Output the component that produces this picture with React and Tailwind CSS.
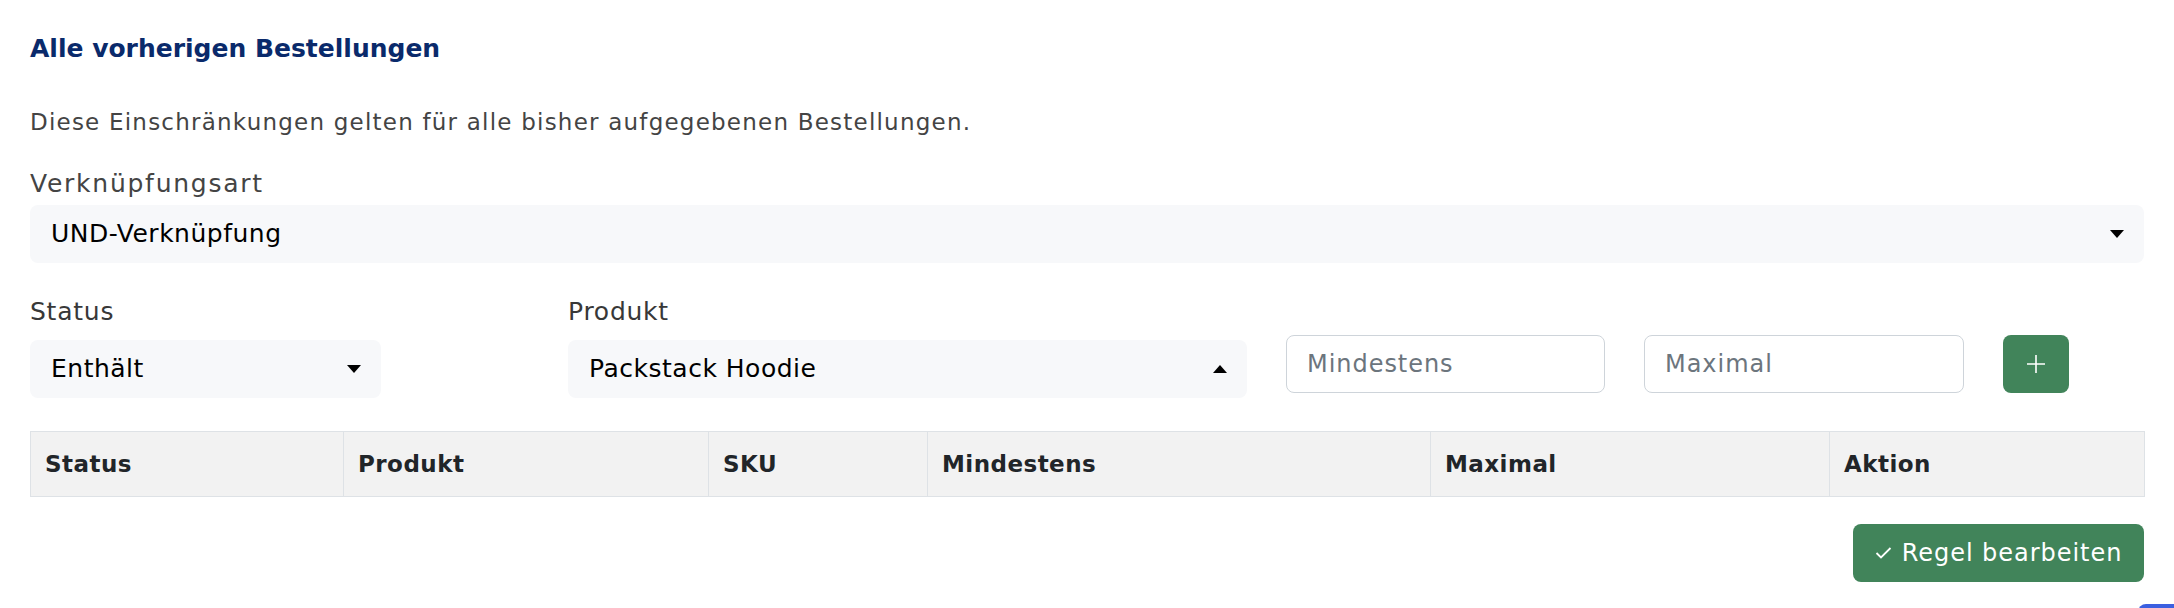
const columns = [
  { label: "Status", width: "w-[313px]" },
  { label: "Produkt", width: "w-[365px]" },
  { label: "SKU", width: "w-[219px]" },
  { label: "Mindestens", width: "w-[503px]" },
  { label: "Maximal", width: "w-[399px]" },
  { label: "Aktion", width: "w-[315px]" },
];

function Caret({ up }) {
  return (
    <svg width="14" height="8" viewBox="0 0 14 8" className="shrink-0">
      {up ? <polygon points="0,8 14,8 7,0" fill="#000" /> : <polygon points="0,0 14,0 7,8" fill="#000" />}
    </svg>
  );
}

function Select({ value, up, className }) {
  return (
    <div className={"flex h-[58px] items-center justify-between rounded-[8px] bg-[#f7f8fa] pl-[21px] pr-[20px] " + className}>
      <span className="text-[25px] tracking-[0.02em] text-black">{value}</span>
      <Caret up={up} />
    </div>
  );
}

export default function App() {
  return (
    <div className="min-h-[608px] w-full bg-white px-[30px] pt-[29px] font-['DejaVu_Sans',sans-serif] text-[#444]">
      <h2 className="text-[25px] leading-[40px] font-bold tracking-[0em] text-[#0a2a6b]">Alle vorherigen Bestellungen</h2>
      <p className="mt-[37px] text-[23px] leading-[33px] tracking-[0.053em]">
        Diese Einschränkungen gelten für alle bisher aufgegebenen Bestellungen.
      </p>

      <div className="mt-[28px] text-[25px] leading-[33px] tracking-[0.07em]">Verknüpfungsart</div>
      <Select value="UND-Verknüpfung" className="mt-[5px] w-full" />

      <div className="mt-[32px] flex items-end gap-[39px]">
        <div className="w-[499px]">
          <div className="mb-[12px] text-[25px] leading-[33px] tracking-[0.03em] text-[#383838]">Status</div>
          <Select value="Enthält" className="w-[351px]" />
        </div>
        <div className="w-[679px]">
          <div className="mb-[12px] text-[25px] leading-[33px] tracking-[0.03em] text-[#383838]">Produkt</div>
          <Select value="Packstack Hoodie" up className="w-full" />
        </div>
        <input
          placeholder="Mindestens"
          className="mb-[5px] h-[58px] w-[319px] rounded-[8px] border-[1.5px] border-[#ced4da] bg-white px-[20px] text-[24px] tracking-[0.04em] placeholder:text-[#6c757d] outline-none"
        />
        <input
          placeholder="Maximal"
          className="mb-[5px] h-[58px] w-[320px] rounded-[8px] border-[1.5px] border-[#ced4da] bg-white px-[20px] text-[24px] tracking-[0.04em] placeholder:text-[#6c757d] outline-none"
        />
        <button className="mb-[5px] flex h-[58px] w-[66px] items-center justify-center rounded-[8px] bg-[#41845a]">
          <svg width="20" height="20" viewBox="0 0 20 20">
            <path d="M10 1v18M1 10h18" stroke="#fff" strokeWidth="1.6" />
          </svg>
        </button>
      </div>

      <table className="mt-[33px] w-full table-fixed border-collapse">
        <thead>
          <tr className="bg-[#f2f2f2]">
            {columns.map((col) => (
              <th
                key={col.label}
                className={"h-[65px] border border-[#dee2e6] pl-[14px] text-left text-[23px] font-bold tracking-[0.02em] text-[#212529] " + col.width}
              >
                {col.label}
              </th>
            ))}
          </tr>
        </thead>
      </table>

      <div className="mt-[27px] flex justify-end">
        <button className="flex h-[58px] w-[291px] items-center justify-center gap-[10px] rounded-[8px] bg-[#41845a] text-[24px] tracking-[0.04em] text-white">
          <svg width="17" height="12" viewBox="0 0 17 12">
            <path d="M1.5 6l4.5 4.5L15.5 1" fill="none" stroke="#fff" strokeWidth="1.8" />
          </svg>
          Regel bearbeiten
        </button>
      </div>

      <div className="mt-[22px] -mr-[30px] flex justify-end">
        <div className="h-[20px] w-[36px] rounded-tl-[8px] bg-[#3b5fe0]" />
      </div>
    </div>
  );
}
